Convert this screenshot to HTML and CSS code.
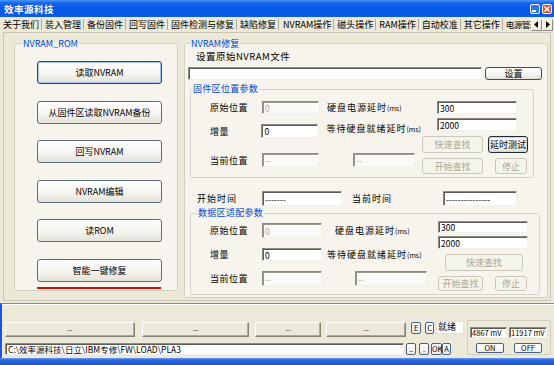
FILE: index.html
```html
<!DOCTYPE html>
<html lang="zh-CN">
<head>
    <meta charset="UTF-8">
    <title>效率源科技</title>
    <link rel="stylesheet" href="styles.css">
</head>
<body>
    <div class="titlebar">
        <span class="title">效率源科技</span>
        <span class="caption">
            <span class="cap min"><svg width="8" height="8" viewBox="0 0 8 8"><rect x="1" y="5" width="4" height="2" fill="#fff"/></svg></span>
            <span class="cap close"><svg width="8" height="8" viewBox="0 0 8 8"><path d="M1.5 1.5 L6.5 6.5 M6.5 1.5 L1.5 6.5" stroke="#fff" stroke-width="1.6"/></svg></span>
        </span>
    </div>

    <div class="tabs">
        <div class="tab-list">
            <span class="tab">关于我们</span>
            <span class="tab">装入管理</span>
            <span class="tab">备份固件</span>
            <span class="tab">回写固件</span>
            <span class="tab">固件检测与修复</span>
            <span class="tab">缺陷修复</span>
            <span class="tab active">NVRAM操作</span>
            <span class="tab">磁头操作</span>
            <span class="tab">RAM操作</span>
            <span class="tab">自动校准</span>
            <span class="tab">其它操作</span>
            <span class="tab last">电源管理</span>
        </div>
        <span class="arrow"><svg width="5" height="7" viewBox="0 0 5 7"><path d="M4 0 L0 3.5 L4 7 Z" fill="#000"/></svg></span>
        <span class="arrow"><svg width="5" height="7" viewBox="0 0 5 7"><path d="M1 0 L5 3.5 L1 7 Z" fill="#000"/></svg></span>
    </div>

    <div class="page">
        <fieldset class="group rom-group">
            <legend>NVRAM_ROM</legend>
            <div class="btn-stack">
                <button class="xp-btn big default">读取NVRAM</button>
                <button class="xp-btn big">从固件区读取NVRAM备份</button>
                <button class="xp-btn big">回写NVRAM</button>
                <button class="xp-btn big">NVRAM编辑</button>
                <button class="xp-btn big">读ROM</button>
                <button class="xp-btn big">智能一键修复</button>
            </div>
            <div class="red-line"></div>
        </fieldset>

        <fieldset class="group fix-group">
            <legend>NVRAM修复</legend>
            <div class="file-label">设置原始NVRAM文件</div>
            <div class="file-row">
                <input class="field file-field" value="">
                <button class="xp-btn set-btn">设置</button>
            </div>

            <fieldset class="sub sub1">
                <legend>固件区位置参数</legend>
                <div class="sub-body">
                    <div class="col-left">
                        <div class="row r1">
                            <span class="lbl">原始位置</span>
                            <input class="field in-a" value="0" disabled>
                            <span class="lbl2 l-power">硬盘电源延时<small>(ms)</small></span>
                        </div>
                        <div class="row r2">
                            <span class="lbl">增量</span>
                            <input class="field in-a" value="0">
                            <span class="lbl2 l-ready">等待硬盘就绪延时<small>(ms)</small></span>
                        </div>
                        <div class="row r3">
                            <span class="lbl">当前位置</span>
                            <input class="field in-a" value="--" disabled>
                            <input class="field in-cur" value="--" disabled>
                        </div>
                    </div>
                    <div class="col-right">
                        <input class="field in-ms" value="300">
                        <input class="field in-ms second" value="2000">
                        <div class="btn-row b1">
                            <button class="xp-btn fast" disabled>快速查找</button>
                            <button class="xp-btn test">延时测试</button>
                        </div>
                        <div class="btn-row b2">
                            <button class="xp-btn start" disabled>开始查找</button>
                            <button class="xp-btn stop" disabled>停止</button>
                        </div>
                    </div>
                </div>
            </fieldset>

            <div class="time-row">
                <span class="t-lbl">开始时间</span>
                <input class="field t-start" value="-------">
                <span class="t-lbl now">当前时间</span>
                <input class="field t-now" value="---------------">
            </div>

            <fieldset class="sub sub2">
                <legend>数据区适配参数</legend>
                <div class="sub-body">
                    <div class="col-left">
                        <div class="row r1">
                            <span class="lbl">原始位置</span>
                            <input class="field in-a" value="0" disabled>
                            <span class="lbl2 l-power">硬盘电源延时<small>(ms)</small></span>
                        </div>
                        <div class="row r2">
                            <span class="lbl">增量</span>
                            <input class="field in-a" value="0">
                            <span class="lbl2 l-ready">等待硬盘就绪延时<small>(ms)</small></span>
                        </div>
                        <div class="row r3">
                            <span class="lbl">当前位置</span>
                            <input class="field in-a" value="--" disabled>
                            <input class="field in-cur" value="--" disabled>
                        </div>
                    </div>
                    <div class="col-right">
                        <input class="field in-ms" value="300">
                        <input class="field in-ms second" value="2000">
                        <button class="xp-btn fast" disabled>快速查找</button>
                        <div class="btn-row b2">
                            <button class="xp-btn start" disabled>开始查找</button>
                            <button class="xp-btn stop" disabled>停止</button>
                        </div>
                    </div>
                </div>
            </fieldset>
        </fieldset>
    </div>

    <div class="bottom">
        <div class="bottom-left">
            <div class="row-a">
                <button class="flat-btn f1">--</button>
                <button class="flat-btn f2">--</button>
                <button class="flat-btn f3">--</button>
                <button class="flat-btn f4">--</button>
                <button class="tiny t-e">E</button>
                <button class="tiny t-c">C</button>
                <span class="status">就绪</span>
            </div>
            <div class="row-b">
                <input class="field path" value="C:\效率源科技\日立\IBM专修\FW\LOAD\PLA3">
                <button class="tiny t-dd">..</button>
                <button class="tiny t-d">.</button>
                <button class="tiny t-ok">OK</button>
                <button class="tiny t-a">A</button>
            </div>
        </div>
        <div class="volt-box">
            <div class="volt-row">
                <input class="field volt v1" value="4867 mV">
                <input class="field volt v2" value="11917 mV">
            </div>
            <div class="volt-row btns">
                <button class="tiny on">ON</button>
                <button class="tiny off">OFF</button>
            </div>
        </div>
    </div>
    <div class="frame-bottom"></div>
</body>
</html>
```

FILE: styles.css
```css
* {
    box-sizing: border-box;
}
html, body {
    margin: 0;
    padding: 0;
}
body {
    width: 554px;
    height: 365px;
    overflow: hidden;
    background: #ece9d8;
    font-family: "Noto Sans CJK SC", "Liberation Sans", sans-serif;
    font-size: 9px;
    color: #000;
}

/* title bar */
.titlebar {
    height: 17px;
    display: flex;
    align-items: center;
    justify-content: space-between;
    padding: 0 2px 0 4px;
    background: linear-gradient(#4c97f6 0, #1565ea 3px, #0556e4 60%, #0b5be6 100%);
}
.title {
    color: #fff;
    font-weight: bold;
    font-size: 9.5px;
    line-height: 12px;
    letter-spacing: 0.5px;
}
.caption {
    display: flex;
    gap: 2px;
}
.cap {
    width: 10px;
    height: 10px;
    border: 1px solid #fff;
    border-radius: 2px;
    display: flex;
    align-items: center;
    justify-content: center;
}
.cap.min { background: #2f74ee; }
.cap.close { background: #dd4c24; }

/* tab strip */
.tabs {
    height: 15px;
    display: flex;
    align-items: center;
    padding-left: 3px;
}
.tab-list {
    width: 528px;
    display: flex;
    align-items: center;
    overflow: hidden;
    white-space: nowrap;
}
.tab {
    line-height: 11px;
    padding-right: 2px;
    margin-right: 3px;
    border-right: 1px solid #aeab9c;
    flex-shrink: 0;
}
.tab.active {
    padding-left: 1px;
}
.tab.last {
    border-right: 0;
    font-size: 8.5px;
    letter-spacing: -0.5px;
}
.arrow {
    width: 11px;
    height: 12px;
    display: flex;
    align-items: center;
    justify-content: center;
    background: #f2f0e6;
    border: 1px solid;
    border-color: #fff #8c8a80 #8c8a80 #fff;
}

/* tab page */
.page {
    height: 269px;
    margin: 0 3px;
    border: 1px solid #c9c6b6;
    display: flex;
    align-items: flex-start;
    gap: 6px;
    padding: 5px 0 0 10px;
}
.group {
    margin: 0;
    min-width: 0;
    border: 1px solid #d0d0bf;
    border-radius: 3px;
    background: #f6f4ec;
}
.group > legend {
    color: #0046d5;
    font-size: 9px;
    line-height: 11px;
    padding: 0 1px;
}
.rom-group {
    width: 164px;
    height: 253px;
    padding: 12px 0 0 0;
}
.rom-group > legend {
    margin-left: 7px;
}
.btn-stack {
    display: flex;
    flex-direction: column;
    gap: 16.5px;
    margin-left: 22px;
}
.red-line {
    width: 124px;
    height: 2px;
    margin: 5px 0 0 22px;
    background: #d40d0d;
}

/* buttons */
.xp-btn {
    font: inherit;
    font-size: 9px;
    color: #000;
    padding: 0;
    border: 1px solid #5d6d80;
    border-radius: 3px;
    background: linear-gradient(#ffffff, #f5f4ef 55%, #e4e2d8);
    line-height: 11px;
}
.xp-btn.big {
    width: 125px;
    height: 23px;
}
.xp-btn.default {
    border-color: #2a4a78;
    box-shadow: inset 0 0 0 1px #a9c2ea;
}
.xp-btn:disabled {
    color: #aca899;
    border-color: #cac8bb;
    background: #f5f4ea;
}

.fix-group {
    width: 364px;
    padding: 0 0 2px 3px;
}
.fix-group > legend {
    margin-left: 2px;
}
.file-label {
    margin: 2px 0 0 8px;
    font-size: 9.5px;
    line-height: 11px;
    letter-spacing: 0.5px;
}
.file-row {
    display: flex;
    margin-top: 5px;
    height: 13px;
}
.file-field {
    width: 294px;
}
.set-btn {
    width: 57px;
    height: 13px;
    margin-left: 3px;
    border-color: #3c4c60;
}

/* text boxes */
.field {
    font: inherit;
    font-size: 8.5px;
    margin: 0;
    height: 13px;
    padding: 0 2px;
    border: 1px solid;
    border-color: #8c8a80 #f2f1ea #f2f1ea #8c8a80;
    box-shadow: inset 1px 1px 0 #5c5c5c;
    background: #fff;
    color: #000;
    outline: none;
}
.field:disabled {
    color: #aca899;
    background: #fbfaf6;
    box-shadow: inset 1px 1px 0 #9c9a90;
}

/* sub groups */
.sub {
    margin: 3px 0 0 2px;
    padding: 6px 0 3px 0;
    border: 1px solid #d6d4c6;
    border-radius: 3px;
    min-width: 0;
}
.sub > legend {
    color: #0046d5;
    font-size: 9px;
    line-height: 12px;
    padding: 0 1px;
    margin-left: 1px;
    letter-spacing: 0.3px;
}
.sub1 {
    width: 344px;
}
.sub-body {
    display: flex;
    align-items: flex-start;
}
.col-left {
    display: flex;
    flex-direction: column;
}
.sub1 .col-left {
    width: 230px;
}
.col-right {
    display: flex;
    flex-direction: column;
    align-items: flex-start;
}
.row {
    display: flex;
    align-items: center;
    white-space: nowrap;
}
.lbl {
    width: 52px;
    margin-left: 19px;
    letter-spacing: 0.5px;
    line-height: 11px;
}
.lbl2 {
    letter-spacing: 1px;
    line-height: 11px;
}
.lbl2 small {
    font-size: 7px;
    letter-spacing: 0;
}
.sub1 .r1 { height: 13px; }
.sub1 .r2 { height: 14px; margin-top: 10px; }
.sub1 .r3 { height: 14px; margin-top: 15px; }
.sub1 .in-a {
    width: 57px;
    height: 100%;
}
.sub1 .lbl2 { margin-left: 8px; }
.sub1 .l-ready { margin-top: -5px; }
.sub1 .in-cur {
    width: 62px;
    height: 100%;
    margin-left: 34px;
}
.sub1 .in-ms {
    width: 80px;
    margin-left: 16px;
}
.sub1 .in-ms.second { margin-top: 4px; }
.btn-row {
    display: flex;
}
.sub1 .b1 { height: 17px; margin-top: 5px; }
.sub1 .b2 { height: 16px; margin-top: 5px; }
.sub1 .fast, .sub1 .start {
    width: 61px;
    margin-left: 1px;
}
.sub1 .test {
    width: 40px;
    margin-left: 5px;
    border-color: #1c2c40;
    box-shadow: inset 0 0 0 1px #d8d6cc;
}
.stop {
    width: 32px;
    margin-left: 12px;
}

/* time row */
.time-row {
    display: flex;
    align-items: center;
    height: 15px;
    margin-top: 13px;
}
.t-lbl {
    width: 65px;
    margin-left: 9px;
    letter-spacing: 1px;
    line-height: 11px;
}
.t-lbl.now {
    width: 91px;
    margin-left: 10px;
}
.t-start {
    width: 80px;
    height: 15px;
}
.t-now {
    width: 74px;
    height: 15px;
}

.sub2 {
    width: 350px;
    margin-top: 1px;
    padding-top: 2px;
}
.sub2 > legend {
    margin-left: 6px;
}
.sub2 .col-left {
    width: 246px;
    margin-top: 2px;
}
.sub2 .r1 { height: 15px; }
.sub2 .r2 { height: 13px; margin-top: 10px; }
.sub2 .r3 { height: 15px; margin-top: 10px; }
.sub2 .in-a {
    width: 60px;
    height: 100%;
}
.sub2 .l-power { margin-left: 13px; }
.sub2 .l-ready { margin-left: 5px; }
.sub2 .in-cur {
    width: 72px;
    height: 100%;
    margin-left: 33px;
}
.sub2 .in-ms {
    width: 90px;
    height: 12px;
    margin-left: 1px;
}
.sub2 .in-ms.second {
    height: 13px;
    margin-top: 3px;
}
.sub2 .fast {
    width: 78px;
    height: 17px;
    margin: 5px 0 0 8px;
}
.sub2 .b2 {
    height: 15px;
    margin-top: 5px;
}
.sub2 .start {
    width: 45px;
    margin-left: 1px;
}

/* bottom bar */
.bottom {
    height: 55px;
    margin-top: 2px;
    border-top: 1px solid #8c8a7e;
    border-left: 2px solid #2256cc;
    box-shadow: inset 0 1px 0 #fff;
    display: flex;
    align-items: flex-start;
}
.bottom-left {
    width: 462px;
    padding-top: 18px;
}
.row-a {
    display: flex;
    align-items: flex-start;
}
.flat-btn {
    font: inherit;
    font-size: 8px;
    color: #333;
    height: 15px;
    padding: 0;
    background: #ece9d8;
    border: 1px solid;
    border-color: #fff #858378 #858378 #fff;
    box-shadow: inset -1px -1px 0 #aca899;
}
.f1 { width: 130px; margin-left: 3px; }
.f2 { width: 108px; margin-left: 7px; }
.f3 { width: 66px; margin-left: 6px; }
.f4 { width: 80px; margin-left: 5px; }
.tiny {
    font: inherit;
    font-size: 7.5px;
    color: #000;
    padding: 0;
    height: 12px;
    line-height: 10px;
    border: 1px solid #4a6282;
    border-radius: 2px;
    background: linear-gradient(#ffffff, #eeede6);
}
.t-e { width: 10px; margin-left: 5px; }
.t-c { width: 9px; margin-left: 4px; }
.status {
    width: 28px;
    height: 13px;
    margin: -1px 0 0 2px;
    padding-left: 1px;
    background: #fff;
    border: 1px solid #e2e0d4;
    line-height: 10px;
}
.row-b {
    display: flex;
    margin-top: 6px;
    height: 12px;
}
.path {
    width: 399px;
    height: 12px;
    margin-left: 3px;
    font-size: 8.5px;
}
.t-dd { width: 10px; margin-left: 2px; }
.t-d { width: 10px; margin-left: 3px; }
.t-ok { width: 11px; margin-left: 2px; }
.t-a { width: 9px; margin-left: 0; }

.volt-box {
    width: 84px;
    height: 35px;
    margin: 16px 0 0 3px;
    padding: 6px 0 0 2px;
    border: 1px solid #d0cfc2;
    border-radius: 2px;
}
.volt-row {
    display: flex;
}
.volt {
    height: 11px;
    font-size: 7.5px;
    padding: 0 1px;
}
.v1 { width: 37px; }
.v2 { width: 38px; margin-left: 2px; }
.volt-row.btns {
    margin-top: 5px;
}
.on, .off {
    width: 28px;
    height: 10px;
    line-height: 8px;
}
.on { margin-left: 6px; }
.off { margin-left: 10px; }

.frame-bottom {
    height: 7px;
    background: linear-gradient(#6a9cf2 0, #2d66dc 2px, #1a54d2 100%);
}
```
